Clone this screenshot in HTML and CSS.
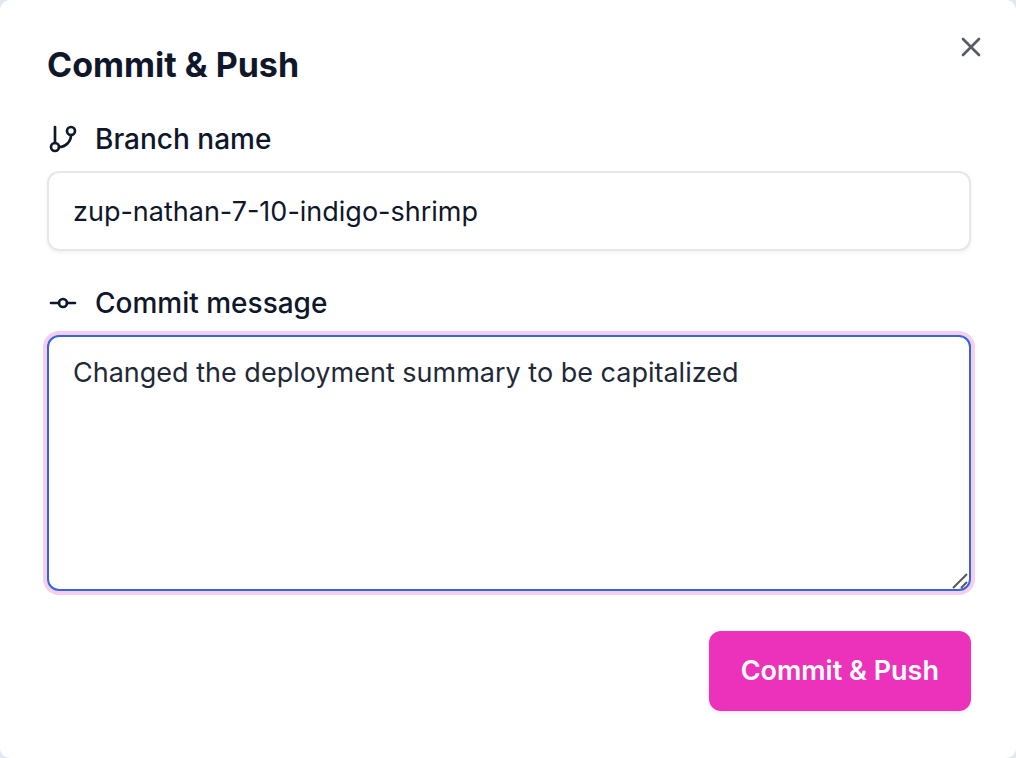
FILE: index.html
```html
<!DOCTYPE html>
<html lang="en">
<head>
  <meta charset="utf-8">
  <meta name="viewport" content="width=device-width, initial-scale=1">
  <title>Commit &amp; Push</title>
  <link rel="stylesheet" href="styles.css">
</head>
<body>
  <main class="dialog" role="dialog" aria-labelledby="dialog-title">
    <h1 class="title" id="dialog-title">Commit &amp; Push</h1>
    <button class="close" type="button" aria-label="Close">
      <svg class="icon" viewBox="0 0 24 24"><path d="M18 6 6 18M6 6l12 12"/></svg>
    </button>
    <form class="form">
      <div class="field">
        <label class="label" for="branch">
          <svg class="icon" viewBox="0 0 24 24"><path d="M6 3v12"/><circle cx="18" cy="6" r="3"/><circle cx="6" cy="18" r="3"/><path d="M18 9a9 9 0 0 1-9 9"/></svg>
          Branch name
        </label>
        <input class="control" id="branch" type="text" value="zup-nathan-7-10-indigo-shrimp">
      </div>
      <div class="field">
        <label class="label" for="message">
          <svg class="icon" viewBox="0 0 24 24"><circle cx="12" cy="12" r="3"/><path d="M3 12h6M15 12h6"/></svg>
          Commit message
        </label>
        <div class="message-box">
          <textarea class="control message" id="message">Changed the deployment summary to be capitalized</textarea>
          <svg class="grip" viewBox="0 0 16 16" aria-hidden="true"><path d="M1 15 15 1M9 15l6-6"/></svg>
        </div>
      </div>
      <button class="submit" type="button">Commit &amp; Push</button>
    </form>
  </main>
</body>
</html>
```
FILE: styles.css
```css
* {
  box-sizing: border-box;
}

body {
  margin: 0;
  background: #e2e8f0;
  color: #0f172a;
  font-family: Inter, "Liberation Sans", sans-serif;
  font-size: 28px;
  line-height: 40px;
}

.dialog {
  position: relative;
  min-height: 100vh;
  padding: 47px 45px 47px 47px;
  border-radius: 10px;
  background: #fff;
}

.title {
  margin: 0 0 36px;
  font-size: 34px;
  font-weight: 700;
  line-height: 36px;
}

.icon {
  width: 32px;
  height: 32px;
  flex: none;
  fill: none;
  stroke: currentColor;
  stroke-width: 2;
  stroke-linecap: round;
  stroke-linejoin: round;
}

.close {
  position: absolute;
  top: 31px;
  right: 29px;
  display: flex;
  padding: 0;
  border: 0;
  background: none;
  color: #575b68;
}

.form {
  display: flex;
  flex-direction: column;
  gap: 32px;
}

.field {
  display: flex;
  flex-direction: column;
  gap: 12px;
}

.label {
  display: flex;
  align-items: center;
  gap: 16px;
  font-weight: 500;
  line-height: 40px;
}

.control {
  display: block;
  width: 100%;
  height: 80px;
  padding: 16px 24px;
  border: 2px solid #e5e7eb;
  border-radius: 12px;
  outline: 0;
  background: #fff;
  box-shadow: 0 2px 4px rgb(0 0 0 / 5%);
  color: #0f172a;
  font: inherit;
  font-size: 27px;
}

.message-box {
  position: relative;
}

.message {
  height: 256px;
  border-color: #3662e3;
  box-shadow: 0 0 0 4px #f5d0e8;
  color: #1f2937;
  resize: none;
}

.grip {
  position: absolute;
  right: 3px;
  bottom: 2px;
  width: 16px;
  height: 16px;
  fill: none;
  stroke: #57585c;
  stroke-width: 2;
}

.submit {
  align-self: flex-end;
  margin-top: 8px;
  padding: 20px 32px;
  border: 0;
  border-radius: 12px;
  background: #ec32ba;
  box-shadow: 0 2px 4px rgb(0 0 0 / 8%);
  color: #fff;
  font: inherit;
  font-size: 27px;
  font-weight: 600;
}
```
